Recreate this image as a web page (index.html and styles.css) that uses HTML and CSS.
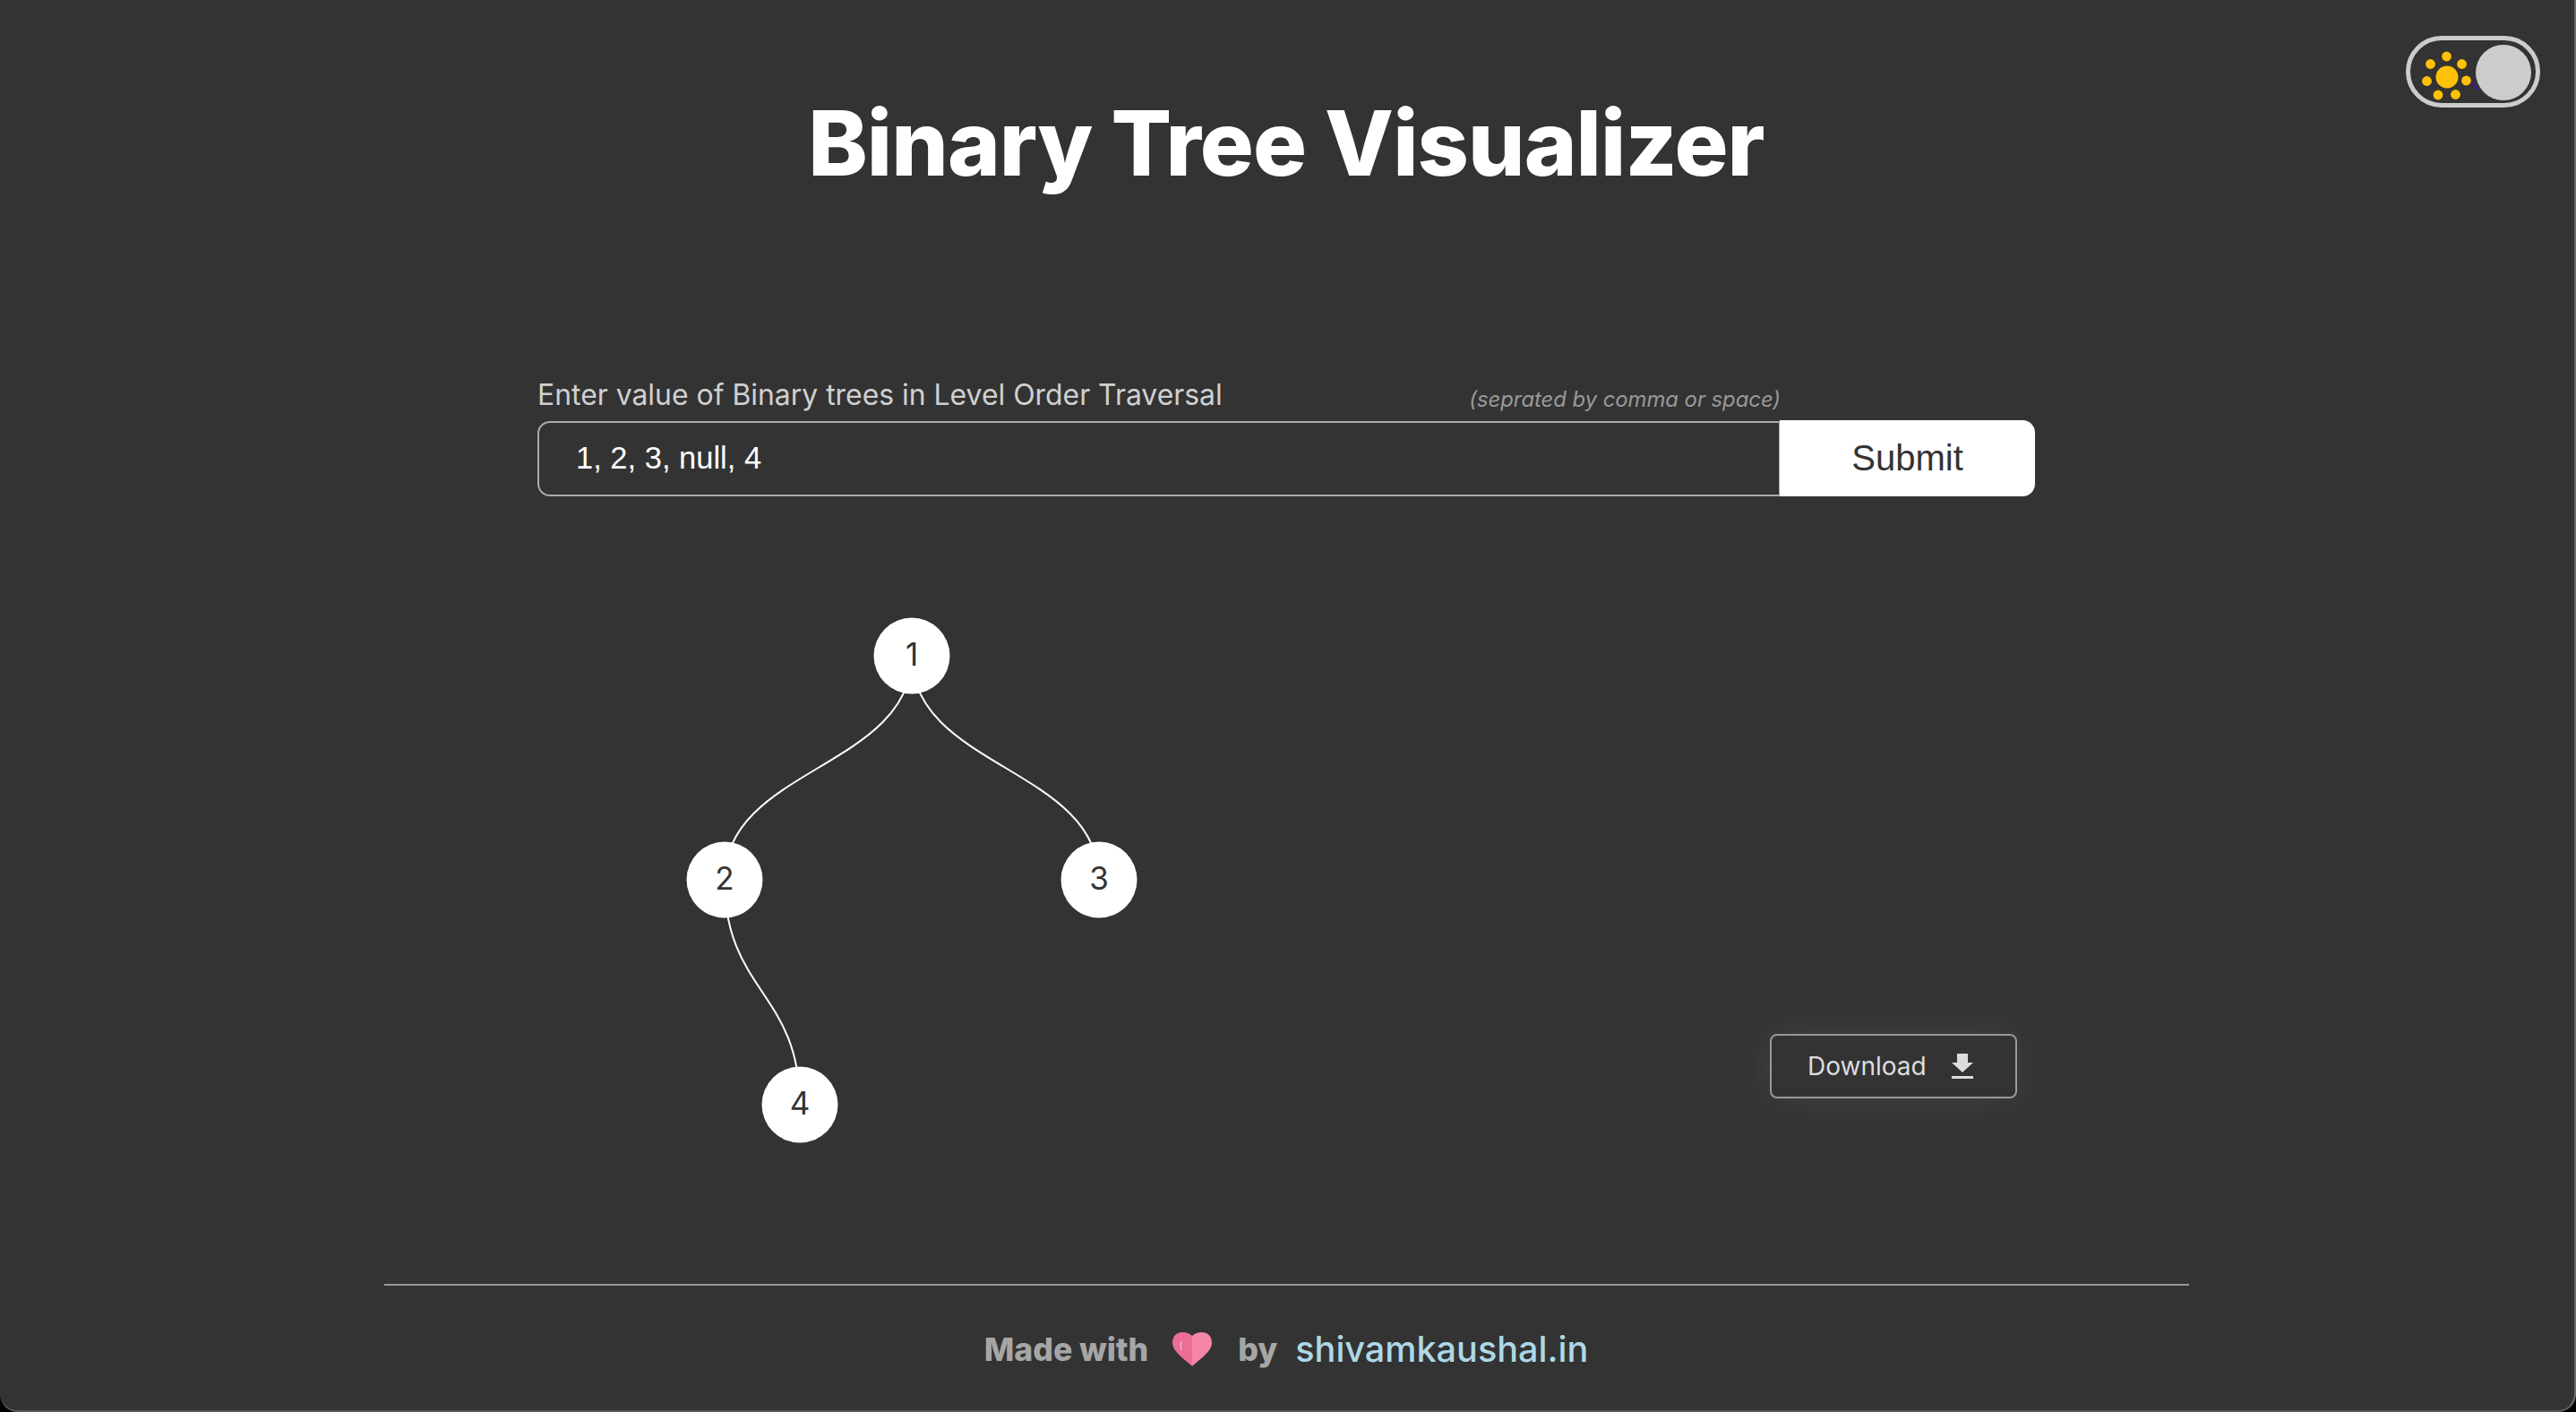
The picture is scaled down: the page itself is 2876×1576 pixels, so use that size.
FILE: index.html
```html
<!doctype html>
<html>

<head>
    <title>Binary Tree Visualizer</title>
    <link rel="stylesheet" href="styles.css">
</head>

<body>
    <div class="app">
        <!-- theme switch -->
        <div class="toggle">
            <svg class="sun" width="150" height="80" viewBox="0 0 150 80">
                <path class="moon" d="M74 50q3 6 8 9l-2 2q-5-4-8-10z" />
                <circle cx="46" cy="46" r="12.5" />
                <circle cx="45.5" cy="23" r="5.4" />
                <circle cx="62.5" cy="31.5" r="5.4" />
                <circle cx="67.5" cy="50" r="5.4" />
                <circle cx="55.5" cy="65.5" r="5.4" />
                <circle cx="36" cy="66" r="5.4" />
                <circle cx="23.5" cy="50.5" r="5.4" />
                <circle cx="27.5" cy="31.5" r="5.4" />
            </svg>
            <span class="knob"></span>
        </div>

        <h1 class="title">Binary Tree Visualizer</h1>

        <form class="treeForm">
            <div class="labels">
                <label class="inputLabel">Enter value of Binary trees in Level Order Traversal</label>
                <span class="hint">(seprated by comma or space)</span>
            </div>
            <div class="inputRow">
                <input class="treeInput" type="text" value="1, 2, 3, null, 4">
                <button class="submitBtn" type="button">Submit</button>
            </div>
        </form>

        <div class="canvas">
            <svg class="tree" width="800" height="640" viewBox="0 0 800 640">
                <path d="M418 62C418 187 209 187 209 312" />
                <path d="M418 62C418 187 627 187 627 312" />
                <path d="M209 312C209 437 293 437 293 563" />
                <g class="node"><circle cx="418" cy="62" r="42.5" /><text x="418" y="60">1</text></g>
                <g class="node"><circle cx="209" cy="312" r="42.5" /><text x="209" y="310">2</text></g>
                <g class="node"><circle cx="627" cy="312" r="42.5" /><text x="627" y="310">3</text></g>
                <g class="node"><circle cx="293" cy="563" r="42.5" /><text x="293" y="561">4</text></g>
            </svg>
            <button class="downloadBtn" type="button">
                Download
                <svg width="24" height="28" viewBox="0 0 24 28">
                    <path d="M6 0h12v10h6L12 21 0 10h6z" />
                    <rect y="25" width="24" height="3" />
                </svg>
            </button>
        </div>

        <footer class="footer">
            <span class="madeWith">Made with</span>
            <svg class="heart" width="44" height="38" viewBox="0 0 44 38">
                <path class="heartL" d="M22 38C16 32 0 22 0 12 0 4 5 0 11 0 16 0 20 2 22 4z" />
                <path class="heartR" d="M22 38C28 32 44 22 44 12 44 4 39 0 33 0 28 0 24 2 22 4z" />
                <path class="shine" d="M10 10q-2 5 0 10" />
            </svg>
            <span class="madeWith">by</span>
            <a class="siteLink">shivamkaushal.in</a>
        </footer>
    </div>
</body>

</html>
```

FILE: styles.css
```css
html, body {
    margin: 0;
    height: 100%;
    background-color: #000;
}

.app {
    position: relative;
    box-sizing: border-box;
    height: 1576px;
    display: flex;
    flex-direction: column;
    align-items: center;
    padding: 102px 2px 0 0;
    background-color: #333;
    border-right: 2px solid #6b6b6b;
    border-bottom: 2px solid #5a5a5a;
    border-radius: 0 0 20px 20px;
    overflow: hidden;
    font-family: Inter, "Liberation Sans", sans-serif;
}

/* theme switch */
.toggle {
    position: absolute;
    top: 40px;
    right: 38px;
    box-sizing: border-box;
    width: 150px;
    height: 80px;
    border: 5px solid #ccc;
    border-radius: 40px;
}

.sun {
    position: absolute;
    top: -5px;
    left: -5px;
    fill: #ffc107;
}

.sun .moon {
    fill: #4a148c;
}

.knob {
    position: absolute;
    top: 5px;
    right: 5px;
    width: 62px;
    height: 62px;
    border-radius: 50%;
    background-color: #ccc;
}

.title {
    margin: 0;
    font-size: 100px;
    line-height: 116px;
    font-weight: 800;
    letter-spacing: -0.9px;
    color: #fff;
}

/* input */
.treeForm {
    width: 1672px;
    margin-top: 198px;
}

.labels {
    display: flex;
    align-items: flex-end;
    justify-content: space-between;
    width: 1388px;
    height: 53px;
}

.inputLabel {
    margin-bottom: 9px;
    font-size: 31.9px;
    color: #d0d0d0;
}

.hint {
    margin-bottom: 9px;
    font-size: 23.8px;
    font-style: italic;
    color: #999;
}

.inputRow {
    display: flex;
    align-items: center;
}

.treeInput {
    box-sizing: border-box;
    width: 1387px;
    height: 84px;
    padding: 0 41px;
    border: 2px solid #aaa;
    border-right-width: 1px;
    border-radius: 14px 0 0 14px;
    outline: none;
    background: none;
    font-family: "Liberation Sans", Arial, sans-serif;
    font-size: 34.5px;
    color: #fff;
}

.submitBtn {
    width: 285px;
    height: 85px;
    border: none;
    border-radius: 0 14px 14px 0;
    background-color: #fff;
    font-family: "Liberation Sans", Arial, sans-serif;
    font-size: 40px;
    color: #333;
}

/* tree */
.canvas {
    position: relative;
    width: 1672px;
    height: 768px;
    margin-top: 116px;
}

.tree {
    display: block;
    fill: none;
    stroke: #fff;
    stroke-width: 2;
}

.node circle {
    fill: #fff;
    stroke: none;
}

.node text {
    fill: #333;
    stroke: none;
    font-size: 35px;
    text-anchor: middle;
    dominant-baseline: central;
}

.downloadBtn {
    position: absolute;
    left: 1376px;
    top: 484px;
    box-sizing: border-box;
    display: flex;
    align-items: center;
    gap: 28px;
    width: 276px;
    height: 72px;
    padding: 0 0 0 40px;
    border: 2px solid #999;
    border-radius: 8px;
    background-color: #333;
    box-shadow: 0 0 40px rgba(255, 255, 255, 0.08);
    font-family: Inter, sans-serif;
    font-size: 28px;
    color: #ddd;
}

.downloadBtn svg {
    fill: #ddd;
}

/* footer */
.footer {
    box-sizing: border-box;
    display: flex;
    align-items: center;
    justify-content: center;
    width: 2015px;
    height: 142px;
    padding-top: 4px;
    border-top: 2px solid #999;
    font-size: 35.6px;
}

.madeWith {
    font-weight: 800;
    color: #a6a6a6;
}

.heart {
    margin: 0 29px 0 27px;
}

.heartL {
    fill: #ee6d96;
}

.heartR {
    fill: #f686a8;
}

.shine {
    fill: none;
    stroke: #fbd3df;
    stroke-width: 1;
}

.siteLink {
    margin-left: 20px;
    font-size: 39.6px;
    font-weight: 500;
    color: #add8e6;
}
```
